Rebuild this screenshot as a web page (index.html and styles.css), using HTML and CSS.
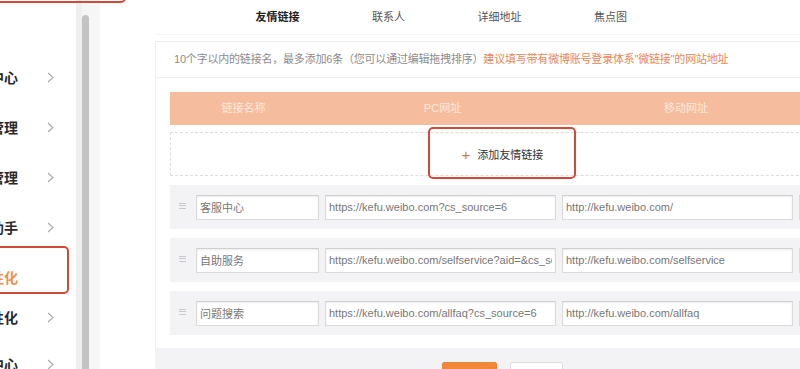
FILE: index.html
```html
<!DOCTYPE html>
<html lang="zh-CN">
<head>
<meta charset="utf-8">
<title>友情链接</title>
<link rel="stylesheet" href="styles.css">
</head>
<body>
<div class="page">
  <div class="annot annot-top"></div>
  <aside class="sidebar">
    <div class="nav-item"><span class="nav-label">管理中心</span><svg class="chev" viewBox="0 0 7 11"><polyline points="1,1 6,5.5 1,10"/></svg></div>
    <div class="nav-item"><span class="nav-label">粉丝管理</span><svg class="chev" viewBox="0 0 7 11"><polyline points="1,1 6,5.5 1,10"/></svg></div>
    <div class="nav-item"><span class="nav-label">内容管理</span><svg class="chev" viewBox="0 0 7 11"><polyline points="1,1 6,5.5 1,10"/></svg></div>
    <div class="nav-item"><span class="nav-label">营销助手</span><svg class="chev" viewBox="0 0 7 11"><polyline points="1,1 6,5.5 1,10"/></svg></div>
    <div class="nav-item nav-active"><span class="nav-label">页面个性化</span><div class="annot annot-nav"></div></div>
    <div class="nav-item nav-short"><span class="nav-label">应用个性化</span><svg class="chev" viewBox="0 0 7 11"><polyline points="1,1 6,5.5 1,10"/></svg></div>
    <div class="nav-item nav-tall"><span class="nav-label">数据中心</span><svg class="chev" viewBox="0 0 7 11"><polyline points="1,1 6,5.5 1,10"/></svg></div>
  </aside>
  <div class="scrollbar"><div class="thumb"></div></div>
  <main class="main">
    <div class="content">
      <nav class="tabs">
        <span class="tab tab-active">友情链接</span>
        <span class="tab">联系人</span>
        <span class="tab">详细地址</span>
        <span class="tab">焦点图</span>
      </nav>
      <section class="card">
        <p class="hint">10个字以内的链接名，最多添加6条（您可以通过编辑拖拽排序）<span class="hint-warn">建议填写带有微博账号登录体系"微链接"的网站地址</span></p>
        <div class="table">
          <div class="thead">
            <span class="th th-name">链接名称</span>
            <span class="th th-pc">PC网址</span>
            <span class="th th-mobile">移动网址</span>
          </div>
          <div class="add-row">
            <span class="plus">+</span><span class="add-text">添加友情链接</span>
            <div class="annot annot-add"></div>
          </div>
          <div class="link-row">
            <span class="handle"><i></i><i></i><i></i></span>
            <input class="field field-name" value="客服中心" readonly>
            <input class="field field-url" value="https://kefu.weibo.com?cs_source=6" readonly>
            <input class="field field-url" value="http://kefu.weibo.com/" readonly>
            <input class="field field-url" value="" readonly>
          </div>
          <div class="link-row">
            <span class="handle"><i></i><i></i><i></i></span>
            <input class="field field-name" value="自助服务" readonly>
            <input class="field field-url" value="https://kefu.weibo.com/selfservice?aid=&amp;cs_source=6" readonly>
            <input class="field field-url" value="http://kefu.weibo.com/selfservice" readonly>
            <input class="field field-url" value="" readonly>
          </div>
          <div class="link-row">
            <span class="handle"><i></i><i></i><i></i></span>
            <input class="field field-name" value="问题搜索" readonly>
            <input class="field field-url" value="https://kefu.weibo.com/allfaq?cs_source=6" readonly>
            <input class="field field-url" value="http://kefu.weibo.com/allfaq" readonly>
            <input class="field field-url" value="" readonly>
          </div>
        </div>
      </section>
      <div class="footer">
        <button class="btn btn-primary">保存</button>
        <button class="btn btn-default">取消</button>
      </div>
    </div>
  </main>
</div>
</body>
</html>
```
FILE: styles.css
```css
* { box-sizing: border-box; }
html, body {
  margin: 0;
  padding: 0;
  width: 800px;
  height: 369px;
  overflow: hidden;
  background: #fff;
  font-family: "Liberation Sans", "Noto Sans CJK SC", sans-serif;
}
.page {
  position: relative;
  display: flex;
  width: 800px;
  height: 369px;
  overflow: hidden;
}

/* annotation boxes */
.annot {
  position: absolute;
  border: 2px solid #cf4a3b;
  border-radius: 5px;
  pointer-events: none;
}
.annot-top {
  left: -10px;
  top: -40px;
  width: 136px;
  height: 43px;
  z-index: 5;
}
.annot-nav {
  left: -12px;
  top: -6px;
  width: 81px;
  height: 48px;
}
.annot-add {
  left: 257px;
  top: -6px;
  width: 148px;
  height: 52px;
}

/* sidebar */
.sidebar {
  position: relative;
  flex: 0 0 76px;
  width: 76px;
  padding-top: 52px;
  overflow: hidden;
  background: #fff;
}
.nav-item {
  position: relative;
  display: flex;
  align-items: center;
  height: 50px;
}
.nav-short { height: 34px; margin-top: -2px; }
.nav-tall { height: 60px; }
.nav-label {
  flex: 0 0 118px;
  width: 118px;
  margin-left: -100px;
  text-align: right;
  white-space: nowrap;
  font-size: 14px;
  font-weight: 700;
  color: #2a2a2a;
}
.nav-active .nav-label { color: #e9924f; }
.chev {
  width: 7px;
  height: 11px;
  margin-left: 29px;
  fill: none;
  stroke: #a9a9a9;
  stroke-width: 1.1;
}

/* scrollbar */
.scrollbar {
  flex: 0 0 24px;
  position: relative;
  background: linear-gradient(to right, #efefef 0, #efefef 6px, #f6f6f6 6px);
  padding-top: 15px;
  padding-left: 6px;
}
.thumb {
  width: 7px;
  height: 400px;
  border-radius: 4px;
  background: #c3c3c3;
}

/* main */
.main {
  flex: 1 1 auto;
  padding-left: 55px;
  background: #fff;
  overflow: hidden;
}
.content {
  width: 700px;
}
.tabs {
  display: flex;
  height: 35px;
  padding-left: 67px;
  border-bottom: 1px solid #f3f3f3;
}
.tab {
  width: 111px;
  text-align: center;
  line-height: 35px;
  font-size: 11px;
  color: #555;
}
.tab-active { color: #222; font-weight: 700; }

.card {
  margin-top: 6px;
  border: 1px solid #eeeeee;
  border-right: none;
  border-bottom: none;
  padding: 0 0 13px 14px;
}
.hint {
  margin: 0 0 0 -14px;
  padding-left: 18px;
  height: 36px;
  line-height: 35px;
  font-size: 11px;
  letter-spacing: -0.2px;
  color: #8c8c8c;
  border-bottom: 1px solid #f0f0f0;
  white-space: nowrap;
}
.hint-warn { color: #ea8655; }

.table {
  width: 664px;
  padding-top: 14px;
}
.thead {
  display: flex;
  height: 33px;
  background: #f5bd9d;
}
.th {
  line-height: 33px;
  text-align: center;
  font-size: 11px;
  color: #fde8dc;
}
.th-name { width: 147px; }
.th-pc { width: 251px; }
.th-mobile { width: 236px; }

.add-row {
  position: relative;
  display: flex;
  align-items: center;
  justify-content: center;
  height: 44px;
  margin-top: 7px;
  border: 1px dashed #dcdcdc;
  border-right: none;
}
.plus {
  font-size: 15px;
  color: #c97b52;
  margin-right: 7px;
  line-height: 1;
}
.add-text {
  font-size: 11px;
  color: #333;
}

.link-row {
  display: flex;
  align-items: center;
  gap: 6px;
  height: 44px;
  margin-top: 9px;
  padding-left: 9px;
  background: #f3f3f6;
  overflow: hidden;
}
.handle {
  flex: 0 0 8px;
  display: flex;
  flex-direction: column;
  justify-content: space-between;
  height: 6px;
  margin-right: 3px;
  margin-top: -3px;
}
.handle i {
  display: block;
  height: 1px;
  width: 7px;
  background: #c9c9c9;
}
.field {
  flex: 0 0 auto;
  width: 231px;
  min-width: 0;
  height: 25px;
  margin: 0;
  padding: 0 3px;
  border: 1px solid #dadada;
  border-top-color: #cfcfcf;
  box-shadow: inset 0 1px 2px rgba(0,0,0,0.08);
  background: #fff;
  font-family: "Liberation Sans", "Noto Sans CJK SC", sans-serif;
  font-size: 11px;
  color: #777;
  outline: none;
}
.field-name { width: 123px; }

.footer {
  display: flex;
  justify-content: center;
  gap: 13px;
  width: 694px;
  height: 60px;
  padding-top: 14px;
  background: #f3f3f5;
}
.btn {
  height: 26px;
  padding: 0;
  border-radius: 2px;
  font-family: "Liberation Sans", "Noto Sans CJK SC", sans-serif;
  font-size: 12px;
}
.btn-primary {
  width: 55px;
  border: 1px solid #ef8639;
  background: #f0873a;
  color: #fff;
}
.btn-default {
  width: 53px;
  border: 1px solid #dcdcdc;
  background: #fff;
  color: #333;
}
```
